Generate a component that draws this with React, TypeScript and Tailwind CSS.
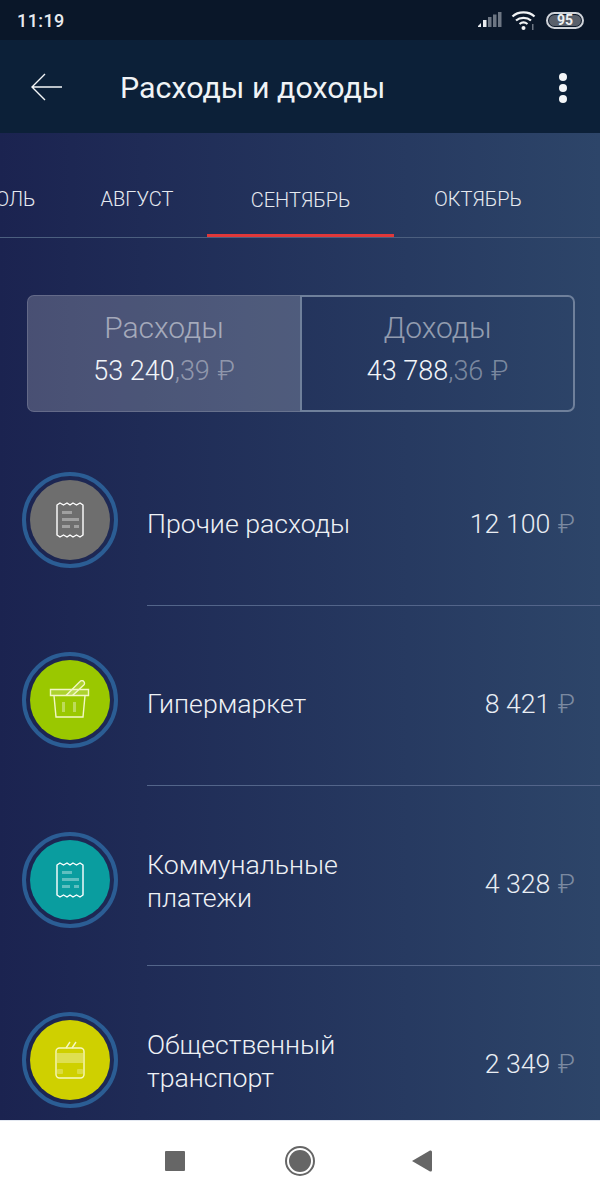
import type { ReactNode } from "react";

const Receipt = () => (
  <svg width="28" height="36" viewBox="0 0 28 36" fill="none">
    <path
      d="M1 3 L4 1 L7.5 3 L11 1 L14 3 L17 1 L20.5 3 L24 1 L27 3 V33 L24 35 L20.5 33 L17 35 L14 33 L11 35 L7.5 33 L4 35 L1 33 Z"
      stroke="white"
      strokeWidth="1.4"
      strokeLinejoin="round"
    />
    <rect x="6" y="9" width="10" height="3" fill="white" fillOpacity="0.35" />
    <rect x="6" y="16" width="17" height="3" fill="white" fillOpacity="0.35" />
    <rect x="6" y="23" width="8" height="3" fill="white" fillOpacity="0.35" />
    <rect x="18" y="23" width="5" height="3" fill="white" fillOpacity="0.35" />
  </svg>
);

const Basket = () => (
  <svg width="42" height="40" viewBox="0 0 42 40" fill="none">
    <path d="M17 15.5 L31 1.5 a2.6 2.6 0 0 1 3.8 3.6 L23.5 15.5" stroke="#f2f7c4" strokeWidth="1.4" fill="white" fillOpacity="0.18" />
    <path d="M1.5 9.5 H39.5 V15.5 H1.5 Z" stroke="#f2f7c4" strokeWidth="1.4" fill="white" fillOpacity="0.18" />
    <path d="M5 15.5 L7 37 H34 L36 15.5" stroke="#f2f7c4" strokeWidth="1.4" />
    <rect x="13" y="22" width="3" height="10" fill="white" fillOpacity="0.35" />
    <rect x="24" y="22" width="3" height="10" fill="white" fillOpacity="0.35" />
  </svg>
);

const Trolley = () => (
  <svg width="30" height="38" viewBox="0 0 30 38" fill="none">
    <path d="M11 7 L15 1 M17 7 L21 1" stroke="#f7f7c0" strokeWidth="1.4" />
    <rect x="1" y="7" width="28" height="30" rx="3.5" stroke="#f7f7c0" strokeWidth="1.4" />
    <rect x="2" y="12" width="26" height="10" fill="white" fillOpacity="0.32" />
    <rect x="2" y="28" width="6" height="5" rx="1" fill="white" fillOpacity="0.25" />
    <rect x="22" y="28" width="6" height="5" rx="1" fill="white" fillOpacity="0.25" />
  </svg>
);

const Money = ({ main, cents }: { main: string; cents: string }) => (
  <span className="text-[27px] leading-[32px] font-light text-[#f1f4f8] whitespace-nowrap">
    {main}
    <span className="text-white/40">
      ,{cents} <span className="ml-[1px]">₽</span>
    </span>
  </span>
);

const rows: { title: ReactNode; amount: string; color: string; icon: ReactNode; nudge: string }[] = [
  { title: "Прочие расходы", amount: "12 100", color: "bg-[#6e6e6e]", icon: <Receipt />, nudge: "" },
  { title: "Гипермаркет", amount: "8 421", color: "bg-[#9ac800]", icon: <Basket />, nudge: "" },
  {
    title: (
      <>
        Коммунальные
        <br />
        платежи
      </>
    ),
    amount: "4 328",
    color: "bg-[#0a9d9f]",
    icon: <Receipt />,
    nudge: "-mt-[6px]",
  },
  {
    title: (
      <>
        Общественный
        <br />
        транспорт
      </>
    ),
    amount: "2 349",
    color: "bg-[#cfd000]",
    icon: <Trolley />,
    nudge: "-mt-[6px]",
  },
];

export default function App() {
  return (
    <div className="w-[600px] h-[1200px] overflow-hidden flex flex-col font-['Roboto',sans-serif] text-white">
      {/* status bar */}
      <div className="h-[40px] shrink-0 bg-[#0a1729] flex items-center justify-between pl-[17px] pr-[16px]">
        <span className="text-[18px] font-medium tracking-[0.4px] text-[#e8ebef]">11:19</span>
        <div className="flex items-center">
          <svg width="26" height="20" viewBox="0 0 26 20" className="mr-[8px]">
            <path d="M1 16 L4 13 V17 H1 Z" fill="#e8ebef" />
            <rect x="6" y="10" width="3.5" height="7" fill="#e8ebef" />
            <rect x="11" y="7" width="3.5" height="10" fill="#6d7683" />
            <rect x="16" y="4.5" width="3.5" height="12.5" fill="#6d7683" />
            <rect x="21" y="2" width="3.5" height="15" fill="#6d7683" />
          </svg>
          <svg width="26" height="22" viewBox="0 0 26 22" fill="none" className="mr-[9px]">
            <path d="M1.5 7.5 C7 2 18 2 23.5 7.5" stroke="#f1f3f5" strokeWidth="2.2" />
            <path d="M5 11.5 C9 8 16 8 20 11.5" stroke="#f1f3f5" strokeWidth="2.2" />
            <path d="M8.5 15 C11 13 14 13 16.5 15" stroke="#f1f3f5" strokeWidth="2.2" />
            <circle cx="12.5" cy="19" r="2" fill="#f1f3f5" />
            <rect x="21" y="15" width="1.5" height="6" fill="#6d7683" />
          </svg>
          <div className="w-[38px] h-[17px] rounded-full border-2 border-[#cfd3d9] flex items-center justify-center p-[1px]">
            <div className="w-full h-full rounded-full bg-[#59606b] flex items-center justify-center text-[14px] leading-none font-bold text-[#eef0f2]">
              95
            </div>
          </div>
        </div>
      </div>

      {/* app bar */}
      <div className="h-[93px] shrink-0 bg-[#0c2038] flex items-center pl-[30px] pr-[33px]">
        <svg width="33" height="30" viewBox="0 0 33 30" fill="none" className="shrink-0 mt-[1px]">
          <path d="M32 15 H2 M15 2 L2 15 L15 28" stroke="#f4f6f8" strokeWidth="1.4" />
        </svg>
        <h1 className="ml-[57px] mt-[2px] text-[30.4px] leading-[36px] font-normal text-[#f0f3f6] flex-1">
          Расходы и доходы
        </h1>
        <div className="flex flex-col gap-[3px] mt-[3px]">
          <div className="w-[8px] h-[8px] rounded-full bg-[#f4f6f8]" />
          <div className="w-[8px] h-[8px] rounded-full bg-[#f4f6f8]" />
          <div className="w-[8px] h-[8px] rounded-full bg-[#f4f6f8]" />
        </div>
      </div>

      {/* content */}
      <div className="h-[987px] shrink-0 overflow-hidden bg-linear-to-r from-[#1b2350] to-[#2d4569]">
        <div className="h-[105px] flex items-end border-b border-[#4c5f7f] overflow-hidden text-[20px] font-light text-[#e6eaf0]">
          <div className="shrink-0 w-[122px] -ml-[55px] h-[67px] flex items-start justify-center pt-[14px]">ИЮЛЬ</div>
          <div className="shrink-0 w-[140px] h-[67px] flex items-start justify-center pt-[14px]">АВГУСТ</div>
          <div className="shrink-0 w-[187px] h-[67px] flex items-start justify-center pt-[14px] border-b-[4px] border-[#e0383a] -mb-[1px]">
            СЕНТЯБРЬ
          </div>
          <div className="shrink-0 w-[168px] h-[67px] flex items-start justify-center pt-[14px]">ОКТЯБРЬ</div>
        </div>

        <div className="mt-[57px] ml-[27px] mr-[25px] h-[117px] flex">
          <div className="w-[273px] shrink-0 rounded-l-[7px] bg-white/20 border-y border-l border-white/15 flex flex-col items-center pt-[14px]">
            <span className="text-[30px] leading-[36px] font-light text-white/50">Расходы</span>
            <span className="mt-[9px]">
              <Money main="53 240" cents="39" />
            </span>
          </div>
          <div className="flex-1 rounded-r-[7px] border-2 border-[#6f809b] flex flex-col items-center pt-[13px]">
            <span className="text-[30px] leading-[36px] font-light text-white/50">Доходы</span>
            <span className="mt-[9px]">
              <Money main="43 788" cents="36" />
            </span>
          </div>
        </div>

        <div className="mt-[14px]">
          {rows.map((row) => (
            <div key={row.amount} className="h-[180px] flex pl-[22px]">
              <div className="mt-[46px] shrink-0 w-[96px] h-[96px] rounded-full border-[4px] border-[#2b5d94] flex items-center justify-center">
                <div className={`w-[80px] h-[80px] rounded-full flex items-center justify-center ${row.color}`}>
                  {row.icon}
                </div>
              </div>
              <div className="ml-[29px] flex-1 flex items-center justify-between border-b border-[#53658a] pt-[18px] pr-[25px]">
                <span className={`text-[26.7px] leading-[33px] font-light text-[#eef1f5] ${row.nudge}`}>{row.title}</span>
                <span className="text-[26.7px] font-light text-[#e9edf3] whitespace-nowrap">
                  {row.amount} <span className="ml-[1px] text-white/40">₽</span>
                </span>
              </div>
            </div>
          ))}
        </div>
      </div>

      {/* system nav */}
      <div className="h-[80px] shrink-0 bg-white border-t border-[#e3e8f1] flex items-center justify-center pr-[4px]">
        <div className="flex items-center">
          <div className="w-[20px] h-[20px] rounded-[1px] bg-[#666666]" />
          <div className="ml-[100px] w-[30px] h-[30px] rounded-full border-2 border-[#666666] flex items-center justify-center">
            <div className="w-[22px] h-[22px] rounded-full bg-[#666666]" />
          </div>
          <svg width="20" height="22" viewBox="0 0 20 22" className="ml-[97px]">
            <path d="M0 11 L18 0.5 Q20 0 20 2 V20 Q20 22 18 21.5 Z" fill="#666666" />
          </svg>
        </div>
      </div>
    </div>
  );
}
